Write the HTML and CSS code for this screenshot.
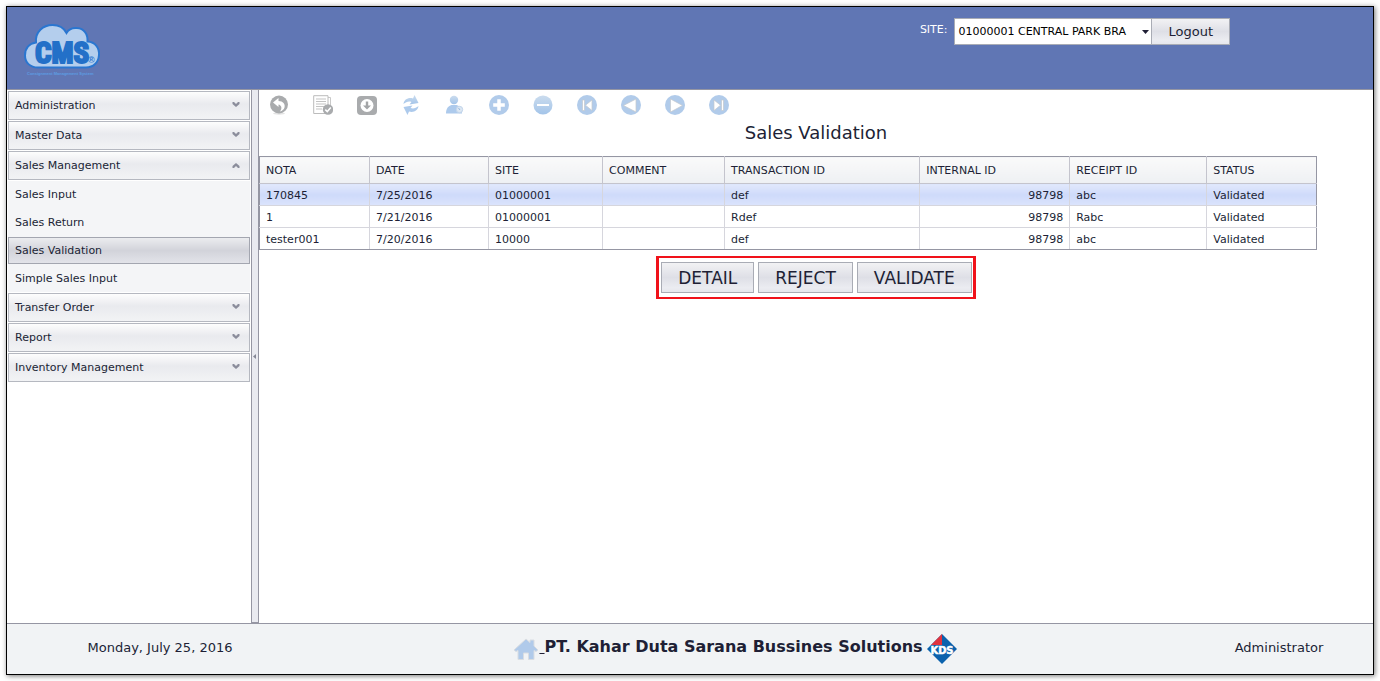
FILE: index.html
```
<!DOCTYPE html>
<html lang="en">
<head>
<meta charset="utf-8">
<title>Sales Validation</title>
<meta name="viewport" content="width=device-width, initial-scale=1">
<link rel="stylesheet" href="styles.css">
</head>
<body>
<svg width="0" height="0" class="defs" aria-hidden="true">
  <defs>
    <linearGradient id="soft-blue" x1="0" y1="0" x2="0" y2="1">
      <stop offset="0" stop-color="#cbdcee"/><stop offset="1" stop-color="#a3c4e9"/>
    </linearGradient>
    <symbol id="chevron" viewBox="0 0 8 6"><path d="M.5 0h1.500L4 2 6 0h1.500v2L4 5 .5 2z" fill="#8b8d9b"/></symbol>
  </defs>
</svg>
<div class="frame">
  <header class="header">
    <svg class="logo" width="80" height="56" viewBox="0 0 80 56" role="img" aria-label="CMS">
      <path d="M15 44.500C7 44.500 2 39.500 2 32.500C2 25.500 6 20.500 13 19.500C12 9 20 2 29.500 2C36 2 41 5 43.500 10C45.500 6.500 50 4.500 54 5C61 5.500 65 11 64.500 18.500C72.500 19 76.500 25 76 32C75.500 39.500 70.500 44.500 63 44.500Z" fill="#b4ceed" stroke="#2a76d0" stroke-width="2"/>
      <text class="logo-name" x="12" y="40">CMS</text>
      <text class="logo-mark" x="65" y="40">®</text>
      <text class="logo-tag" x="4" y="52">Consignment Management System</text>
    </svg>
    <form class="site">
      <label class="site-label" for="site">SITE:</label>
      <span class="site-select">
        <select id="site"><option>01000001 CENTRAL PARK BRA</option></select>
        <svg class="site-arrow" width="7" height="4" viewBox="0 0 7 4"><path d="M0 0h7L3.500 4z" fill="#201f35"/></svg>
      </span>
      <button type="button" class="button logout">Logout</button>
    </form>
  </header>

  <div class="body">
    <nav class="nav">
      <button type="button" class="group">Administration<svg width="8" height="6"><use href="#chevron"/></svg></button>
      <button type="button" class="group">Master Data<svg width="8" height="6"><use href="#chevron"/></svg></button>
      <button type="button" class="group open" aria-expanded="true">Sales Management<svg width="8" height="6"><use href="#chevron"/></svg></button>
      <div class="items">
        <a class="item" href="#">Sales Input</a>
        <a class="item" href="#">Sales Return</a>
        <a class="item selected" href="#" aria-current="page">Sales Validation</a>
        <a class="item" href="#">Simple Sales Input</a>
      </div>
      <button type="button" class="group">Transfer Order<svg width="8" height="6"><use href="#chevron"/></svg></button>
      <button type="button" class="group">Report<svg width="8" height="6"><use href="#chevron"/></svg></button>
      <button type="button" class="group">Inventory Management<svg width="8" height="6"><use href="#chevron"/></svg></button>
    </nav>
    <div class="splitter"><svg width="3" height="5" viewBox="0 0 3 5"><path d="M3 0v5L0 2.500z" fill="#858796"/></svg></div>

    <main class="main">
      <div class="toolbar">
        <button type="button" aria-label="Undo"><svg width="20" height="20" viewBox="0 0 20 20"><ellipse cx="10" cy="18.500" rx="6" ry="1.200" fill="#e3e3e3"/><circle cx="10" cy="9.500" r="9" fill="#a9abad"/><path d="M4 7.500L9.500 3v3C14 6 16.500 9 15.500 12.500C15 14.500 13 16 11 16.500C13.500 13.500 12.500 10 9.500 9.500V12Z" fill="#fff"/></svg></button>
        <button type="button" aria-label="Validate list"><svg width="20" height="20" viewBox="0 0 20 20"><path d="M4 2.500h13.500V16H8" fill="none" stroke="#c9c9c9"/><path d="M.7.700H15V18.500H.7z" fill="#fff" stroke="#bcbcbc"/><path d="M3 4h10M3 6.500h10M3 9h10M3 11.500h8M3 14h6" stroke="#c3c3c3"/><circle cx="15" cy="14.500" r="5.200" fill="#a9abad"/><path d="M12.300 14.600l2 2 3.500-4" fill="none" stroke="#fff" stroke-width="1.500"/></svg></button>
        <button type="button" aria-label="Download"><svg width="20" height="20" viewBox="0 0 20 20"><rect y="1" width="20" height="19" rx="4" fill="#a9abad"/><circle cx="10" cy="10.500" r="6.500" fill="#fff"/><path d="M8.800 6.500h2.400v4H14l-4 4-4-4h2.800z" fill="#a3a5a7"/></svg></button>
        <button type="button" aria-label="Refresh"><svg width="20" height="20" viewBox="0 0 20 20"><path d="M2.500 9C3 4.500 7.500 2 12 3.500L13.500 0 17.500 8 8.500 9.500 10.500 7C7.500 6 5 7 2.500 9z" fill="url(#soft-blue)"/><path d="M17.500 11C17 15.500 12.500 18 8 16.500L6.500 20 2.500 12 11.500 10.500 9.500 13C12.500 14 15 13 17.500 11z" fill="#adcaec"/></svg></button>
        <button type="button" aria-label="User"><svg width="20" height="20" viewBox="0 0 20 20"><circle cx="9" cy="5" r="4.200" fill="url(#soft-blue)"/><path d="M6.500 10h5C15 11 17 13 17 18.500H1C1 13 3.500 11 6.500 10z" fill="#adcaec"/><circle cx="14.500" cy="14.500" r="3.200" fill="#dce7f3" stroke="#c2d5ea"/><path d="M13.500 13l1.500 2" stroke="#95b8df"/></svg></button>
        <button type="button" aria-label="Add"><svg width="20" height="20" viewBox="0 0 20 20"><circle cx="10" cy="10" r="10" fill="#b1cbea"/><path d="M10 4.200v11.600M4.200 10h11.600" stroke="#fff" stroke-width="3.500"/></svg></button>
        <button type="button" aria-label="Remove"><svg width="20" height="20" viewBox="0 0 20 20"><circle cx="10" cy="10" r="9.500" fill="url(#soft-blue)"/><path d="M4 10h12" stroke="#fff" stroke-width="2"/></svg></button>
        <button type="button" aria-label="First"><svg width="20" height="20" viewBox="0 0 20 20"><circle cx="10" cy="10" r="10" fill="#b1cbea"/><path d="M5.500 5h2v10.500h-2zM15 5v10.500L8.500 10.200z" fill="#fff" stroke="#c4c8cd" stroke-width=".7"/></svg></button>
        <button type="button" aria-label="Previous"><svg width="20" height="20" viewBox="0 0 20 20"><circle cx="10" cy="10" r="10" fill="#b1cbea"/><path d="M15 4v13L2.500 10.500z" fill="#fff" stroke="#c4c8cd" stroke-width=".7"/></svg></button>
        <button type="button" aria-label="Next"><svg width="20" height="20" viewBox="0 0 20 20"><circle cx="10" cy="10" r="10" fill="#b1cbea"/><path d="M5.500 4v13L17.500 10.500z" fill="#fff" stroke="#c4c8cd" stroke-width=".7"/></svg></button>
        <button type="button" aria-label="Last"><svg width="20" height="20" viewBox="0 0 20 20"><circle cx="10" cy="10" r="10" fill="#b1cbea"/><path d="M14.500 5h-2v10.500h2zM5 5v10.500L11.500 10.200z" fill="#fff" stroke="#c4c8cd" stroke-width=".7"/></svg></button>
      </div>
      <h1 class="title">Sales Validation</h1>
      <table class="grid">
        <colgroup><col class="c-nota"><col class="c-date"><col class="c-site"><col class="c-comment"><col class="c-trans"><col class="c-internal"><col class="c-receipt"><col class="c-status"></colgroup>
        <thead>
          <tr><th>NOTA</th><th>DATE</th><th>SITE</th><th>COMMENT</th><th>TRANSACTION ID</th><th>INTERNAL ID</th><th>RECEIPT ID</th><th>STATUS</th></tr>
        </thead>
        <tbody>
          <tr class="current"><td>170845</td><td>7/25/2016</td><td>01000001</td><td></td><td>def</td><td class="num">98798</td><td>abc</td><td>Validated</td></tr>
          <tr><td>1</td><td>7/21/2016</td><td>01000001</td><td></td><td>Rdef</td><td class="num">98798</td><td>Rabc</td><td>Validated</td></tr>
          <tr><td>tester001</td><td>7/20/2016</td><td>10000</td><td></td><td>def</td><td class="num">98798</td><td>abc</td><td>Validated</td></tr>
        </tbody>
      </table>
      <div class="actions">
        <button type="button" class="button">DETAIL</button>
        <button type="button" class="button">REJECT</button>
        <button type="button" class="button">VALIDATE</button>
      </div>
    </main>
  </div>

  <footer class="footer">
    <span class="date">Monday, July 25, 2016</span>
    <span class="company">
      <a class="home" href="#" aria-label="Home"><svg width="26" height="24" viewBox="0 0 26 24"><path d="M1 13L13 2l4 3.500V3h4v6l4 4-2 1.500-2-1V22.500h-5.500V16h-5v6.500H5V13.500l-2 1z" fill="#b0caea" stroke="#d9dde2" stroke-width="1"/></svg><span class="gap">&nbsp;</span></a><strong>PT. Kahar Duta Sarana Bussines Solutions</strong>
      <svg class="kds" width="30" height="30" viewBox="0 0 30 30" role="img" aria-label="KDS"><path d="M15 0L30 15 15 30 0 15z" fill="#0b62ad"/><path d="M15 0v11H4z" fill="#e0333f"/><text x="15" y="20">KDS</text></svg>
    </span>
    <span class="user">Administrator</span>
  </footer>
</div>
</body>
</html>
```
FILE: styles.css
```
* { box-sizing: border-box; }

body {
  margin: 0;
  padding: 6px;
  background: #fff;
  color: #201f35;
  font: 11px/14px Verdana, "DejaVu Sans", sans-serif;
}

button, select { font: inherit; color: inherit; margin: 0; }
a { color: inherit; text-decoration: none; }
svg { display: block; flex: none; }
.defs { position: absolute; }

.frame {
  display: flex;
  flex-direction: column;
  min-height: calc(100vh - 12px);
  border: 1px solid #000;
  box-shadow: 1px 1px 5px rgba(0, 0, 0, 0.55);
}

/* Header */
.header {
  display: flex;
  justify-content: space-between;
  align-items: flex-start;
  min-height: 83px;
  padding: 11px 143px 8px 16px;
  background: #6076b4;
  border-bottom: 1px solid #9596a3;
}
.logo { margin-top: 5px; }
.logo-name {
  font: bold 29px "Liberation Sans Narrow", "Roboto Condensed", "DejaVu Sans Condensed", sans-serif;
  fill: #2370c8;
  stroke: #2370c8;
  stroke-width: 2px;
}
.logo-mark { font: bold 9px "Liberation Sans", sans-serif; fill: #2a76d0; }
.logo-tag { font: bold 4px "Liberation Sans", sans-serif; fill: #5d9de2; }

.site { display: flex; align-items: stretch; }
.site-label { padding: 5px 7px 0 0; color: #fff; }
.site-select { display: flex; position: relative; }
.site-select select {
  width: 198px;
  height: 27px;
  padding: 1px 19px 0 3px;
  border: 1px solid #a9acb5;
  border-radius: 0;
  background: #fff;
  color: #000;
  appearance: none;
}
.site-arrow { position: absolute; right: 3px; top: 12px; pointer-events: none; }

.button {
  border: 1px solid #a9acb5;
  border-radius: 0;
  background: linear-gradient(#f2f2f4, #dedfe6 50%, #ebecf1 85%, #e6e7ed);
}
.logout { padding: 0 16px; margin-left: -1px; font-size: 13px; position: relative; }

/* Body */
.body { flex: 1; display: grid; grid-template-columns: 244px 8px minmax(0, 1fr); }

.nav { display: flex; flex-direction: column; gap: 1px; padding: 1px; }
.group {
  display: flex;
  justify-content: space-between;
  align-items: center;
  height: 29px;
  padding: 1px 9px 0 6px;
  border: 1px solid #b5b8c0;
  background: linear-gradient(#fdfdfd, #e9eaee 45%, #f2f3f5);
  text-align: left;
}
.group svg { margin-bottom: 2px; }
.open svg { transform: rotate(180deg); }
.items { display: flex; flex-direction: column; gap: 1px; background: #f4f5f7; }
.item { display: flex; align-items: center; height: 27px; padding: 1px 6px 0; border: 1px solid transparent; }
.selected { border-color: #a3a6b0; background: linear-gradient(#ebecef, #d2d3da 50%, #e2e3e9); }

.splitter {
  display: flex;
  align-items: center;
  padding-left: 1px;
  border: solid #9596a3;
  border-width: 0 1px 1px;
  background: #e9eaf0;
}

/* Content */
.toolbar { display: flex; flex-wrap: wrap; gap: 24px; padding: 5px 10px; }
.toolbar button { padding: 0; border: 0; background: none; }
.title { margin: 0 0 11px; font-size: 18px; line-height: 25px; font-weight: normal; text-align: center; }

.grid { width: 95%; table-layout: fixed; border-collapse: collapse; border: 1px solid #9596a3; }
.grid th, .grid td { padding: 2px 6px 0; font-weight: normal; text-align: left; border: 1px solid #d6d6dd; }
.grid th { height: 27px; border-color: #c4c4cd; background: linear-gradient(#fafafa, #eef0f3); border-top-color: #9596a3; }
.grid td { height: 22px; }
.grid tr > :first-child { border-left-color: #9596a3; }
.grid tr > :last-child { border-right-color: #9596a3; }
.grid tbody tr:last-child td { border-bottom-color: #9596a3; }
.grid .num { text-align: right; }
.current td { background: linear-gradient(#e1e8fc, #cedafa 50%, #dbe4fc); }
.c-nota { width: 110px; }
.c-date { width: 119px; }
.c-site { width: 114px; }
.c-comment { width: 122px; }
.c-trans { width: 195px; }
.c-internal { width: 150px; }
.c-receipt { width: 137px; }
.c-status { width: 110px; }

.actions {
  display: flex;
  gap: 4px;
  width: fit-content;
  margin: 6px auto 0;
  padding: 4px 1px 4px 2px;
  border: solid #f0121a;
  border-width: 2px 3px;
}
.actions .button { height: 31px; padding: 0 16px; font-size: 17px; }

/* Footer */
.footer {
  display: grid;
  grid-template-columns: 306fr 844fr 216fr;
  align-items: center;
  min-height: 51px;
  border-top: 1px solid #9596a3;
  background: #f1f3f5;
  font-size: 13px;
  text-align: center;
}
.date, .user { padding-bottom: 3px; }
.user { padding-left: 28px; }
.company { display: flex; justify-content: center; align-items: center; font-size: 16px; line-height: 20px; }
.company strong { padding-bottom: 5px; }
.home { display: flex; align-items: center; }
.gap { padding-bottom: 4px; text-decoration: underline; }
.kds { margin-left: 4px; }
.kds text { font: bold 11px "DejaVu Sans Condensed", "DejaVu Sans", sans-serif; fill: #fff; stroke: #fff; stroke-width: .5px; text-anchor: middle; }
```
